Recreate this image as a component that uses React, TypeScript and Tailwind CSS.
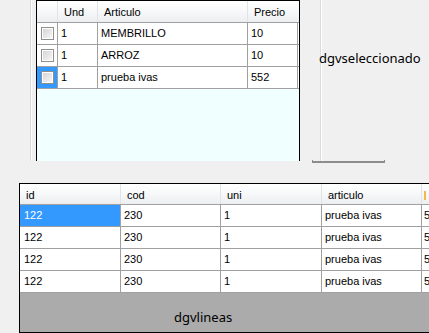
import React from "react";

const topRows = [
  { und: "1", art: "MEMBRILLO", precio: "10", sel: false },
  { und: "1", art: "ARROZ", precio: "10", sel: false },
  { und: "1", art: "prueba ivas", precio: "552", sel: true },
];

const bottomRows = [0, 1, 2, 3];

function CheckBox() {
  return (
    <div className="w-[13px] h-[13px] border border-[#8f8f8f] bg-white p-[1px]">
      <div className="w-full h-full bg-gradient-to-br from-[#d4d4d4] to-[#f7f7f7]" />
    </div>
  );
}

function HeaderCell({ w, children, last }: { w: string; children?: React.ReactNode; last?: boolean }) {
  return (
    <div className={`${w} shrink-0 h-full flex items-center pl-[6px] pt-[2px] ${last ? "" : "border-r border-[#e2e3e4]"}`}>
      {children}
    </div>
  );
}

export default function App() {
  return (
    <div
      className="w-[429px] h-[333px] bg-[#f0f0f0] overflow-hidden text-[11px] text-black leading-none"
      style={{ fontFamily: '"Liberation Sans", Arial, sans-serif' }}
    >
      {/* top section */}
      <div className="flex items-start h-[183px]">
        <div className="w-[30px] shrink-0" />
        <div className="w-[1px] h-[161px] bg-[#dadada] shrink-0" />
        <div className="w-[1px] h-[161px] bg-[#fbfbfb] shrink-0" />
        <div className="w-[4px] shrink-0" />
        {/* dgvseleccionado grid */}
        <div className="w-[264px] h-[161px] shrink-0 border-l border-r border-t border-black bg-[#f0ffff] overflow-hidden flex flex-col">
          <div className="h-[22px] shrink-0 flex border-b border-[#a0a0a0] bg-gradient-to-b from-white via-[#f7f8f9] to-[#eceef0]">
            <HeaderCell w="w-[21px]" />
            <HeaderCell w="w-[40px]">Und</HeaderCell>
            <HeaderCell w="w-[150px]">Articulo</HeaderCell>
            <HeaderCell w="w-[51px]" last>Precio</HeaderCell>
          </div>
          {topRows.map((r, i) => (
            <div key={i} className="h-[22px] shrink-0 flex border-b border-[#a0a0a0] bg-white">
              <div className={`w-[21px] shrink-0 border-r border-[#a0a0a0] flex items-center justify-center ${r.sel ? "bg-[#3399ff]" : ""}`}>
                <CheckBox />
              </div>
              <div className="w-[40px] shrink-0 border-r border-[#a0a0a0] flex items-center pl-[3px]">{r.und}</div>
              <div className="w-[150px] shrink-0 border-r border-[#a0a0a0] flex items-center pl-[3px]">{r.art}</div>
              <div className="w-[50px] shrink-0 border-r border-[#a0a0a0] flex items-center pl-[3px]">{r.precio}</div>
            </div>
          ))}
        </div>
        {/* right area */}
        <div className="flex-1 flex flex-col">
          <div className="h-[161px] flex">
            <div className="w-[20px] shrink-0" />
            <div className="w-[1px] h-full bg-[#dcdcdc] shrink-0" />
            <div className="w-[1px] h-full bg-white shrink-0" />
            <div
              className="-ml-[3px] mt-[49px] text-[13px] leading-[18px] text-black"
              style={{ fontFamily: '"Noto Sans", "Open Sans", sans-serif' }}
            >
              dgvseleccionado
            </div>
          </div>
          <div className="ml-[12px] -mt-[1px] w-[73px] h-[3px] border-l border-r border-b-2 border-[#8c8c8c]" />
        </div>
      </div>

      {/* bottom section */}
      <div className="flex">
        <div className="w-[19px] shrink-0" />
        <div className="w-[420px] h-[150px] shrink-0 border-l border-t border-b border-black flex flex-col overflow-hidden">
          <div className="h-[21px] shrink-0 flex border-b border-[#a0a0a0] bg-gradient-to-b from-white via-[#f7f8f9] to-[#eceef0]">
            <HeaderCell w="w-[101px]">id</HeaderCell>
            <HeaderCell w="w-[100px]">cod</HeaderCell>
            <HeaderCell w="w-[101px]">uni</HeaderCell>
            <HeaderCell w="w-[100px]">articulo</HeaderCell>
            <div className="w-[100px] shrink-0 h-full flex items-center pl-[2px]">
              <div className="w-[2px] h-[9px] bg-[#f2b84a] mt-[2px]" />
            </div>
          </div>
          {bottomRows.map((i) => (
            <div key={i} className="h-[22px] shrink-0 flex border-b border-[#a0a0a0] bg-white">
              <div className={`w-[101px] shrink-0 border-r border-[#a0a0a0] flex items-center pl-[4px] ${i === 0 ? "bg-[#3399ff] text-white" : ""}`}>122</div>
              <div className="w-[100px] shrink-0 border-r border-[#a0a0a0] flex items-center pl-[3px]">230</div>
              <div className="w-[101px] shrink-0 border-r border-[#a0a0a0] flex items-center pl-[3px]">1</div>
              <div className="w-[100px] shrink-0 border-r border-[#a0a0a0] flex items-center pl-[3px]">prueba ivas</div>
              <div className="w-[100px] shrink-0 flex items-center pl-[2px]">552</div>
            </div>
          ))}
          <div className="flex-1 bg-[#ababab]">
            <div
              className="ml-[154px] mt-[15px] text-[13px] leading-[18px] text-black"
              style={{ fontFamily: '"Noto Sans", "Open Sans", sans-serif' }}
            >
              dgvlineas
            </div>
          </div>
        </div>
      </div>
    </div>
  );
}
